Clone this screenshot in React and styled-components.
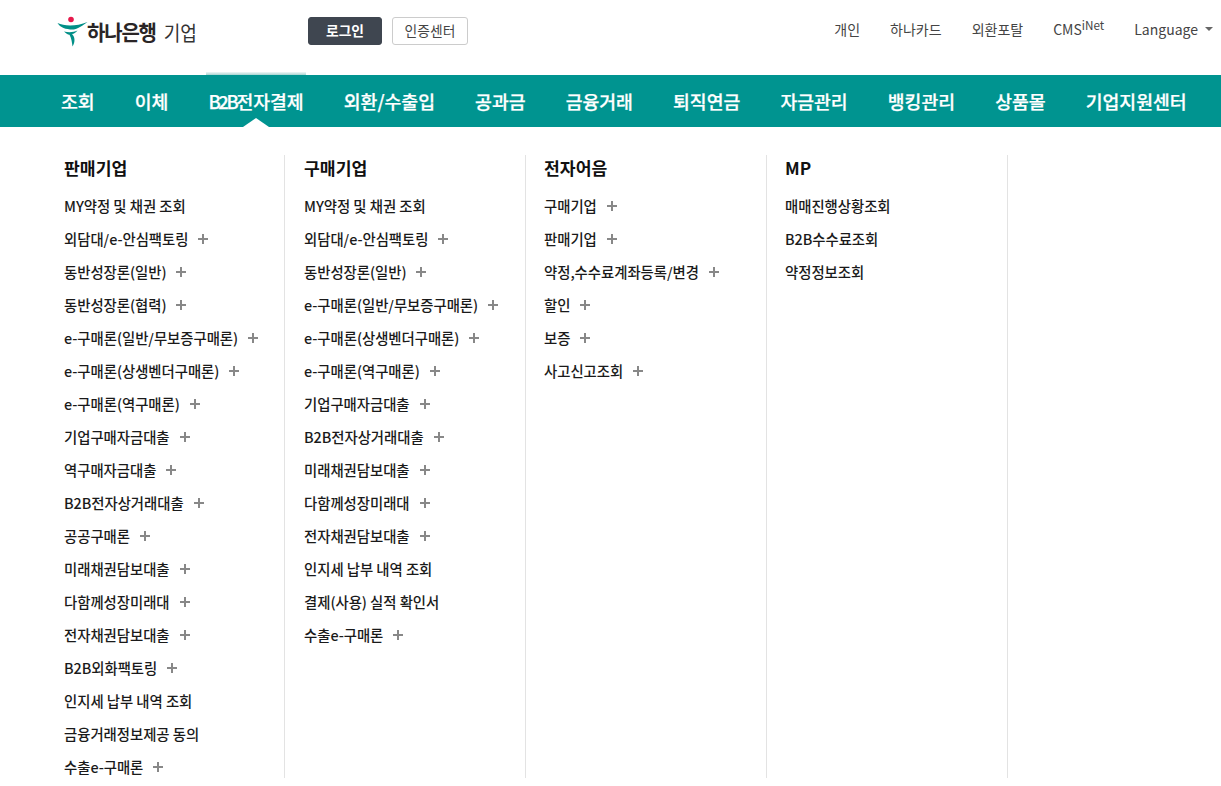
import React from "react";
import styled, { createGlobalStyle } from "styled-components";

const Global = createGlobalStyle`
  html, body { margin: 0; padding: 0; background: #fff; }
  body { font-family: "Noto Sans CJK KR", "Noto Sans", sans-serif; color: #111; overflow: hidden; }
`;

const Page = styled.div`
  width: 1221px;
  height: 786px;
  overflow: hidden;
`;

const TopBar = styled.header`
  height: 75px;
  display: flex;
  align-items: flex-start;
  box-sizing: border-box;
  padding-left: 56px;
`;

const Logo = styled.a`
  width: 252px;
  height: 50px;
  display: flex;
  align-items: center;
  margin-top: 7px;
`;

const LogoName = styled.span`
  font-size: 20px;
  font-weight: 700;
  letter-spacing: -1.2px;
  color: #2a2526;
  line-height: 1;
  margin-left: -1px;
  transform: scaleY(1.05);
`;

const LogoSub = styled.span`
  font-size: 18px;
  font-weight: 400;
  color: #333;
  margin-left: 8px;
  line-height: 1;
  transform: scaleY(1.12);
`;

const AuthGroup = styled.div`
  display: flex;
  gap: 10px;
  margin-top: 17px;
`;

const AuthButton = styled.button`
  width: ${(p) => (p.$primary ? 74 : 76)}px;
  height: 28px;
  padding: 0 0 2px;
  box-sizing: border-box;
  border-radius: 3px;
  border: 1px solid ${(p) => (p.$primary ? "#3f4650" : "#cccccc")};
  background: ${(p) => (p.$primary ? "#3f4650" : "#fff")};
  color: ${(p) => (p.$primary ? "#fff" : "#444")};
  font-family: inherit;
  font-size: 13.8px;
  font-weight: ${(p) => (p.$primary ? 700 : 400)};
`;

const UtilLinks = styled.nav`
  margin-left: auto;
  margin-right: 8px;
  margin-top: 15px;
  display: flex;
  align-items: center;
  height: 28px;
  gap: 30px;
  font-size: 14px;
  color: #444;
`;

const UtilLink = styled.a`
  display: inline-flex;
  align-items: center;
  white-space: nowrap;
  line-height: 28px;
`;

const Sup = styled.sup`
  font-size: 11.7px;
  line-height: 1;
  align-self: flex-start;
  margin-top: 4px;
`;

const Caret = styled.i`
  width: 0;
  height: 0;
  margin-left: 7px;
  border-left: 4px solid transparent;
  border-right: 4px solid transparent;
  border-top: 4px solid #666;
`;

const MainNav = styled.nav`
  height: 52px;
  background: #009490;
  display: flex;
  align-items: center;
  gap: 40.1px;
  padding-left: 61px;
  box-sizing: border-box;
`;

const NavItem = styled.a`
  position: relative;
  color: #fff;
  font-size: 18.3px;
  font-weight: 500;
  -webkit-text-stroke: 0.25px #fff;
  line-height: 52px;
  white-space: nowrap;

  ${(p) =>
    p.$active &&
    `
    &::before {
      content: "";
      position: absolute;
      left: -2px;
      right: -2px;
      top: -3px;
      height: 3px;
      background: linear-gradient(#f2f7f7, #a8d3d0);
    }
    &::after {
      content: "";
      position: absolute;
      left: 50%;
      bottom: 0;
      margin-left: -13px;
      border-left: 13px solid transparent;
      border-right: 13px solid transparent;
      border-bottom: 9px solid #fff;
    }
  `}
`;

const NavLatin = styled.span`
  letter-spacing: -2.3px;
`;

const Mega = styled.section`
  display: flex;
  padding: 28px 0 0 44px;
  height: 623px;
  box-sizing: content-box;
`;

const Column = styled.div`
  width: 241px;
  height: 623px;
  box-sizing: border-box;
  padding-left: ${(p) => p.$pad}px;
  border-right: 1px solid #e3e3e3;
  overflow: hidden;
`;

const ColumnTitle = styled.h3`
  margin: 0 0 8px;
  height: 26px;
  line-height: 26px;
  font-size: 17.2px;
  font-weight: 700;
  color: #111;
`;

const List = styled.ul`
  margin: 0;
  padding: 0;
  list-style: none;
`;

const Item = styled.li`
  height: 33px;
  line-height: 33px;
  font-size: 14.4px;
  font-weight: 500;
  color: #1a1a1a;
  white-space: nowrap;
  display: flex;
  align-items: center;
  letter-spacing: -0.05px;
`;

const Plus = styled.svg`
  width: 10px;
  height: 10px;
  margin-left: 10px;
  flex: none;
`;

const PlusIcon = () => (
  <Plus viewBox="0 0 10 10">
    <path d="M0 5h10M5 0v10" stroke="#888" strokeWidth="2" fill="none" />
  </Plus>
);

const LogoMark = () => (
  <svg width="32" height="32" viewBox="0 0 32 32" style={{ flex: "none" }}>
    <circle cx="15" cy="3.500" r="2.800" fill="#e6194b" />
    <path d="M1.500 7c7 3.500 19 3.500 30-1-8 6-12 7.500-15 7.500C10 13.500 4 11.500 1.500 7z" fill="#008f87" />
    <path d="M8 15.500c5 1.200 9.500.8 13.500-1-2 2.500-3.500 3.200-5.500 3.500 3 3 3.500 8 .5 12.500-.5-4-1-8.500-3-11.800-2-.2-3.500-1.200-5.500-3.200z" fill="#008f87" />
  </svg>
);

const nav = ["조회", "이체", "B2B전자결제", "외환/수출입", "공과금", "금융거래", "퇴직연금", "자금관리", "뱅킹관리", "상품몰", "기업지원센터"];

const columns = [
  {
    title: "판매기업",
    pad: 20,
    items: [
      ["MY약정 및 채권 조회"], ["외담대/e-안심팩토링", 1], ["동반성장론(일반)", 1], ["동반성장론(협력)", 1],
      ["e-구매론(일반/무보증구매론)", 1], ["e-구매론(상생벤더구매론)", 1], ["e-구매론(역구매론)", 1], ["기업구매자금대출", 1],
      ["역구매자금대출", 1], ["B2B전자상거래대출", 1], ["공공구매론", 1], ["미래채권담보대출", 1],
      ["다함께성장미래대", 1], ["전자채권담보대출", 1], ["B2B외화팩토링", 1], ["인지세 납부 내역 조회"],
      ["금융거래정보제공 동의"], ["수출e-구매론", 1],
    ],
  },
  {
    title: "구매기업",
    pad: 19,
    items: [
      ["MY약정 및 채권 조회"], ["외담대/e-안심팩토링", 1], ["동반성장론(일반)", 1], ["e-구매론(일반/무보증구매론)", 1],
      ["e-구매론(상생벤더구매론)", 1], ["e-구매론(역구매론)", 1], ["기업구매자금대출", 1], ["B2B전자상거래대출", 1],
      ["미래채권담보대출", 1], ["다함께성장미래대", 1], ["전자채권담보대출", 1], ["인지세 납부 내역 조회"],
      ["결제(사용) 실적 확인서"], ["수출e-구매론", 1],
    ],
  },
  {
    title: "전자어음",
    pad: 18,
    items: [["구매기업", 1], ["판매기업", 1], ["약정,수수료계좌등록/변경", 1], ["할인", 1], ["보증", 1], ["사고신고조회", 1]],
  },
  {
    title: "MP",
    pad: 18,
    items: [["매매진행상황조회"], ["B2B수수료조회"], ["약정정보조회"]],
  },
];

export default function App() {
  return (
    <Page>
      <Global />
      <TopBar>
        <Logo>
          <LogoMark />
          <LogoName>하나은행</LogoName>
          <LogoSub>기업</LogoSub>
        </Logo>
        <AuthGroup>
          <AuthButton $primary>로그인</AuthButton>
          <AuthButton>인증센터</AuthButton>
        </AuthGroup>
        <UtilLinks>
          <UtilLink>개인</UtilLink>
          <UtilLink>하나카드</UtilLink>
          <UtilLink>외환포탈</UtilLink>
          <UtilLink>CMS<Sup>iNet</Sup></UtilLink>
          <UtilLink>Language<Caret /></UtilLink>
        </UtilLinks>
      </TopBar>
      <MainNav>
        {nav.map((n) => (
          <NavItem key={n} $active={n === "B2B전자결제"}>
            {n === "B2B전자결제" ? (
              <>
                <NavLatin>B2B</NavLatin>전자결제
              </>
            ) : (
              n
            )}
          </NavItem>
        ))}
      </MainNav>
      <Mega>
        {columns.map((c) => (
          <Column key={c.title} $pad={c.pad}>
            <ColumnTitle>{c.title}</ColumnTitle>
            <List>
              {c.items.map(([label, more]) => (
                <Item key={label}>
                  {label}
                  {more ? <PlusIcon /> : null}
                </Item>
              ))}
            </List>
          </Column>
        ))}
      </Mega>
    </Page>
  );
}
